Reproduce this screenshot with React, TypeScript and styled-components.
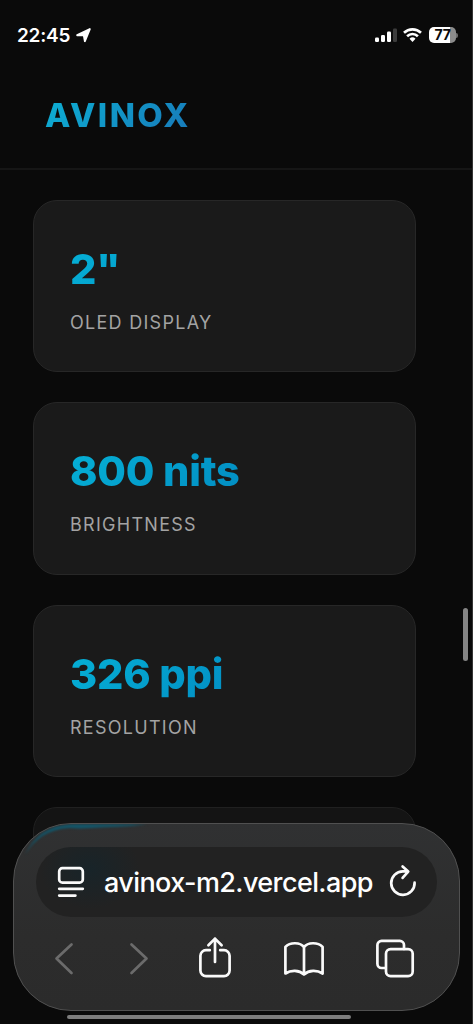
import React from "react";
import styled, { createGlobalStyle } from "styled-components";

const GlobalStyle = createGlobalStyle`
  * { box-sizing: border-box; }
  body { margin: 0; background: #0a0a0a; }
`;

const Screen = styled.div`
  position: relative;
  width: 473px;
  height: 1024px;
  overflow: hidden;
  display: flex;
  flex-direction: column;
  background: #0a0a0a;
  border-right: 1px solid #353535;
  font-family: Inter, "Liberation Sans", sans-serif;
  color: #fff;
`;

const StatusBar = styled.div`
  flex: none;
  height: 70px;
  padding: 0 14px 0 17px;
  display: flex;
  justify-content: space-between;
`;

const StatusGroup = styled.div`
  display: flex;
  align-items: center;
  height: 70px;
`;

const Clock = styled.span`
  width: 59px;
  font-size: 19px;
  font-weight: 600;
  letter-spacing: -0.25px;
  white-space: nowrap;
`;

const Glyph = styled.svg`
  display: block;
  flex: none;
  overflow: visible;
`;

const WifiGlyph = styled(Glyph)`
  margin-left: 6px;
`;

const Battery = styled.div`
  width: 27px;
  height: 16px;
  margin-left: 7px;
  border-radius: 5px;
  background: linear-gradient(90deg, #fff 78%, #8c8c8c 78%);
  color: #0a0a0a;
  font-size: 14px;
  font-weight: 700;
  letter-spacing: -0.3px;
  line-height: 16px;
  text-align: center;
`;

const BatteryTip = styled.div`
  width: 2px;
  height: 5px;
  border-radius: 0 2px 2px 0;
  background: #6d6d6d;
`;

const Header = styled.header`
  flex: none;
  display: flex;
  align-items: center;
  height: 100px;
  padding: 0 45px 8px;
  border-bottom: 2px solid #161616;
`;

const Logo = styled.div`
  font-size: 33px;
  font-weight: 800;
  letter-spacing: 2.4px;
  line-height: 42px;
  background: linear-gradient(135deg, #0cb0d4, #1878b8);
  background-clip: text;
  -webkit-background-clip: text;
  color: transparent;
`;

const Cards = styled.main`
  display: flex;
  flex-direction: column;
  gap: 30px;
  padding: 30px 56px 0 33px;
`;

const Card = styled.section<{ $dim?: boolean }>`
  flex: none;
  height: 172.4px;
  padding: 44px 36px 0;
  border: 1.5px solid ${(p) => (p.$dim ? "#202020" : "#272727")};
  border-radius: 24px;
  background: ${(p) => (p.$dim ? "#141414" : "#1a1a1a")};
`;

const Value = styled.div`
  font-size: 41.5px;
  font-weight: 800;
  letter-spacing: -0.25px;
  line-height: 48px;
  background: linear-gradient(135deg, #05b0d6, #0077b6);
  background-clip: text;
  -webkit-background-clip: text;
  color: transparent;
`;

const Label = styled.div`
  margin-top: 18px;
  font-size: 18px;
  line-height: 24px;
  letter-spacing: 1.28px;
  color: #a3a3a3;
`;

const ScrollThumb = styled.div`
  position: absolute;
  top: 608px;
  right: 4px;
  width: 5px;
  height: 53px;
  border-radius: 3px;
  background: #858585;
`;

const BrowserBar = styled.nav`
  position: absolute;
  top: 823px;
  left: 13px;
  width: 447px;
  height: 188px;
  padding: 23px 22px 0;
  border: 1px solid #505050;
  border-radius: 58px;
  overflow: hidden;
  background: linear-gradient(#303132, #2c2c2c 60%, #2b2b2b);
`;

const Reflection = styled.svg`
  position: absolute;
  top: -1px;
  left: -1px;
  filter: blur(1.2px);
`;

const AddressPill = styled.div`
  position: relative;
  display: flex;
  align-items: center;
  height: 70px;
  padding: 0 21px 0 22px;
  border-radius: 35px;
  background:
    radial-gradient(ellipse 50px 40px at 54px 22px, #182429, transparent),
    #222222;
`;

const Address = styled.span`
  flex: 1;
  margin-left: 20px;
  padding-top: 2px;
  font-size: 27px;
  font-weight: 450;
  letter-spacing: -0.6px;
  line-height: 36px;
  white-space: nowrap;
`;

const Actions = styled.div`
  position: relative;
  display: grid;
  grid-template-columns: 56px 94px 57px 121px 62px;
  align-items: center;
  justify-items: center;
  height: 84px;
`;

const HomeIndicator = styled.div`
  position: absolute;
  left: 67px;
  top: 1015px;
  width: 284px;
  height: 4px;
  border-radius: 3px;
  background: #7d7d7d;
`;

const stroke = {
  fill: "none",
  stroke: "#fafafa",
  strokeWidth: 2.7,
  strokeLinecap: "round" as const,
  strokeLinejoin: "round" as const,
};

const specs = [
  { value: '2"', label: "OLED DISPLAY" },
  { value: "800 nits", label: "BRIGHTNESS" },
  { value: "326 ppi", label: "RESOLUTION" },
];

export default function App() {
  return (
    <Screen>
      <GlobalStyle />
      <StatusBar>
        <StatusGroup>
          <Clock>22:45</Clock>
          <Glyph width="15" height="15" viewBox="0 0 15 15">
            <path
              d="M13.8 1.1 8.9 13.2 7.8 7.4 1.2 7.2Z"
              fill="#fff"
              stroke="#fff"
              strokeWidth="1.9"
              strokeLinejoin="round"
            />
          </Glyph>
        </StatusGroup>
        <StatusGroup>
          <Glyph width="22" height="14" viewBox="0 0 22 14">
            <rect x="0" y="9.5" width="4" height="4.5" rx="1.2" fill="#fff" />
            <rect x="6" y="7" width="4" height="7" rx="1.2" fill="#fff" />
            <rect x="12" y="3.6" width="4" height="10.4" rx="1.2" fill="#fff" />
            <rect x="18" y="0.4" width="4" height="13.6" rx="1.2" fill="#3c3c3c" />
          </Glyph>
          <WifiGlyph width="19" height="14" viewBox="0 0 19 14">
            <path d="M1 4.8a12.2 12.2 0 0 1 17 0M4.1 8.2a7.7 7.7 0 0 1 10.8 0" fill="none" stroke="#fff" strokeWidth="2.6" />
            <path d="M6.5 10.7a4.4 4.4 0 0 1 6 0L9.5 14Z" fill="#fff" />
          </WifiGlyph>
          <Battery>77</Battery>
          <BatteryTip />
        </StatusGroup>
      </StatusBar>

      <Header>
        <Logo>AVINOX</Logo>
      </Header>

      <Cards>
        {specs.map((s) => (
          <Card key={s.label}>
            <Value>{s.value}</Value>
            <Label>{s.label}</Label>
          </Card>
        ))}
        <Card $dim />
      </Cards>

      <ScrollThumb />

      <BrowserBar>
        <Reflection width="160" height="60" viewBox="0 0 160 60">
          <path
            d="M12 32Q25 3 58 1.2H134Q118 3.5 104 3.8T78 5 56 5Q26 7 12 32Z"
            fill="#12566a"
          />
        </Reflection>
        <AddressPill>
          <Glyph width="26" height="30" viewBox="0 0 26 30" {...stroke}>
            <rect x="1.2" y="1.2" width="23.6" height="14.4" rx="3.2" />
            <path d="M1.2 21.8h23.6M1.2 28.6h16.2" />
          </Glyph>
          <Address>avinox-m2.vercel.app</Address>
          <Glyph width="26" height="31" viewBox="0 1.8 26 31" {...stroke}>
            <path d="M24.6 17.5A11.7 11.7 0 1 1 12.9 6.2h4.6M12.6 1.3l5.6 5.1-5.6 6.3" />
          </Glyph>
        </AddressPill>
        <Actions>
          <Glyph width="18" height="32" viewBox="0 0 18 32" {...stroke} stroke="#6b6b6b">
            <path d="M16.5 1.5 1.5 15.5l15 14.5" />
          </Glyph>
          <Glyph width="18" height="32" viewBox="0 0 18 32" {...stroke} stroke="#6b6b6b">
            <path d="M1.5 1.5 16.5 15.5 1.5 30" />
          </Glyph>
          <Glyph width="32" height="41" viewBox="0 2 32 41" {...stroke}>
            <path d="M10.8 13.2H7a5.6 5.6 0 0 0-5.6 5.6v14.8A5.6 5.6 0 0 0 7 39.2h18a5.6 5.6 0 0 0 5.6-5.6V18.8a5.6 5.6 0 0 0-5.6-5.6h-3.8M16 25V1.6M9.4 8.2 16 1.6l6.6 6.6" />
          </Glyph>
          <Glyph width="40" height="34" viewBox="0 0 40 34" {...stroke}>
            <path d="M20 5.2C16.3 0 6 0 1.4 5V31.5c5.6-3.6 13.6-3.6 18.6 1 5-4.6 13-4.6 18.6-1V5C34 0 23.7 0 20 5.2ZM20 5.2V32.5" />
          </Glyph>
          <Glyph width="38" height="38" viewBox="0 0.5 38 38" {...stroke}>
            <rect x="10" y="9.6" width="26.7" height="27" rx="4.6" />
            <path d="M9.8 28.5H5.6a4.2 4.2 0 0 1-4.2-4.2V5.6a4.2 4.2 0 0 1 4.2-4.2h18.2A4.2 4.2 0 0 1 28 5.6v3.8" />
          </Glyph>
        </Actions>
      </BrowserBar>
      <HomeIndicator />
    </Screen>
  );
}
